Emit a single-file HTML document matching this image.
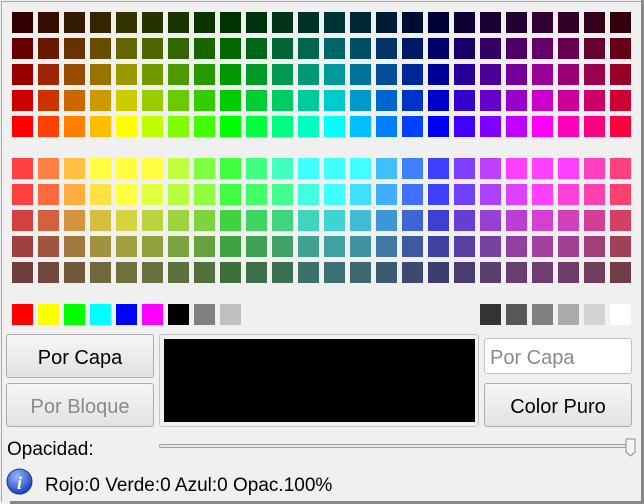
<!DOCTYPE html><html><head><meta charset="utf-8"><style>
*{margin:0;padding:0;box-sizing:border-box}
body{width:644px;height:504px;background:#f0f0f0;position:relative;overflow:hidden;font-family:"Liberation Sans",sans-serif}
.c{position:absolute;width:21px;height:21px}
.btn{position:absolute;border:1px solid #adadad;border-radius:3px;background:linear-gradient(#f6f6f6,#e2e2e2);font-size:20px;text-align:center;color:#000}
</style></head><body>
<div style="position:absolute;left:1px;top:1px;width:641px;height:501px;border-left:1px solid #a8a8a8;border-top:1px solid #a8a8a8"></div>
<div style="position:absolute;left:641px;top:0;width:3px;height:504px;background:#888"></div>
<div style="position:absolute;left:10px;top:501px;width:634px;height:3px;background:#888"></div>
<div id="g"></div>
<div class="btn" style="left:6px;top:334px;width:148px;height:44px;line-height:46px">Por Capa</div>
<div class="btn" style="left:6px;top:383px;width:148px;height:44px;line-height:46px;color:#8a8a8a">Por Bloque</div>
<div style="position:absolute;left:159px;top:334px;width:320px;height:93px;border:1px solid #c4c4c4;border-radius:3px;background:#f0f0f0"></div>
<div style="position:absolute;left:164px;top:339px;width:311px;height:83px;background:#000"></div>
<div style="position:absolute;left:484px;top:338px;width:148px;height:36px;border:1px solid #c4c4c4;border-radius:3px;background:#fff;font-size:20px;color:#8a8a8a;line-height:38px;padding-left:5px">Por Capa</div>
<div class="btn" style="left:484px;top:383px;width:148px;height:44px;line-height:46px">Color Puro</div>
<div style="position:absolute;left:7px;top:439px;font-size:19px">Opacidad:</div>
<div style="position:absolute;left:159px;top:444px;width:476px;height:4px;border:1px solid #a0a0a0;border-radius:2px;background:#e6e6e6"></div>
<svg style="position:absolute;left:625px;top:438px" width="12" height="20"><path d="M1 1H10V14L5.5 18L1 14Z" fill="#f4f4f4" stroke="#8c8c8c"/></svg>
<svg style="position:absolute;left:6px;top:468px" width="27" height="27"><defs><radialGradient id="r" cx="40%" cy="30%" r="70%"><stop offset="0" stop-color="#9ab8ff"/><stop offset="1" stop-color="#1a3fc0"/></radialGradient></defs><circle cx="13.5" cy="13.5" r="12.5" fill="url(#r)" stroke="#1a3a9a"/><text x="13.5" y="21" text-anchor="middle" font-family="Liberation Serif" font-style="italic" font-weight="bold" font-size="18" fill="#fff">i</text></svg>
<div style="position:absolute;left:45px;top:475px;font-size:19px">Rojo:0 Verde:0 Azul:0 Opac.100%</div>
<script>
function hsv(h,s,v){h=((h%360)+360)%360;var f=function(n){var k=(n+h/60)%6;return Math.round(255*(v-v*s*Math.max(0,Math.min(k,4-k,1))));};return 'rgb('+f(5)+','+f(3)+','+f(1)+')';}
var g=document.getElementById('g'),html='';
function cell(x,y,c){html+='<div class="c" style="left:'+x+'px;top:'+y+'px;background:'+c+'"></div>';}
for(var r=0;r<5;r++)for(var i=0;i<24;i++)cell(12+26*i,12+26*r,hsv(i*15,1,0.2*(r+1)));
var h1=[0,20,40,60,60,60,80,100,120,140,160,180,180,180,200,220,240,260,280,300,300,300,320,340];
var h2=[0,13,34,51,60,69,83,95,120,133,145,170,180,190,205,225,240,255,275,290,300,310,325,345];
var sv=[[.75,1],[.75,1],[.7,.83],[.6,.63],[.46,.44]];
for(var r=0;r<5;r++)for(var i=0;i<24;i++)cell(12+26*i,158+26*r,hsv(r==0?h1[i]:h2[i],sv[r][0],sv[r][1]));
var b=['#ff0000','#ffff00','#00ff00','#00ffff','#0000ff','#ff00ff','#000000','#808080','#c0c0c0'];
b.forEach(function(c,i){cell(12+26*i,304,c)});
['#333333','#585858','#808080','#aaaaaa','#d4d4d4','#ffffff'].forEach(function(c,i){cell(480+26*i,304,c)});
g.innerHTML=html;
</script>
</body></html>
